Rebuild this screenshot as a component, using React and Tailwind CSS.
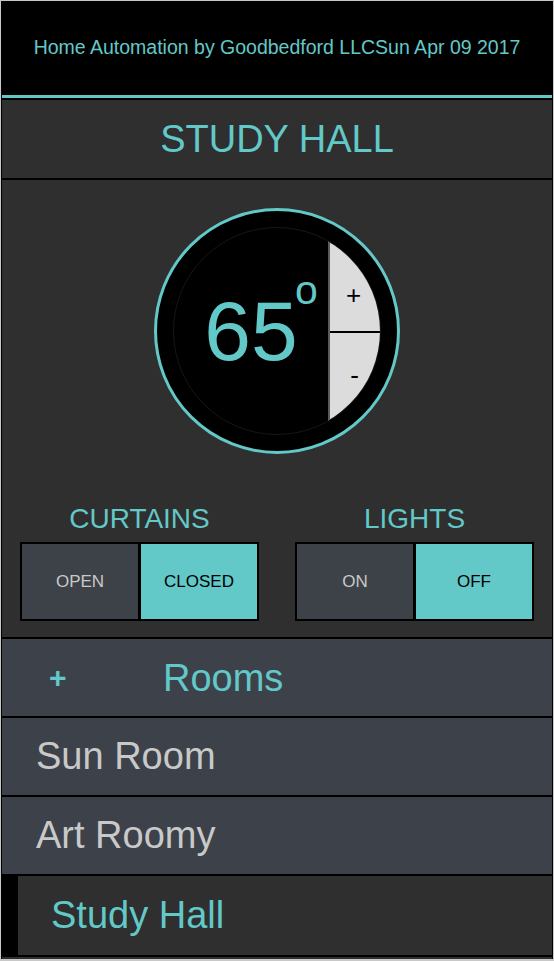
import React from "react";

const rooms = [
  { name: "Sun Room", active: false },
  { name: "Art Roomy", active: false },
  { name: "Study Hall", active: true },
];

const Toggle = ({ label, left, right, active }) => (
  <div className="flex flex-1 flex-col items-center">
    <div className="text-[28px] leading-none text-[#63c8c8]">{label}</div>
    <div className="mt-[9px] flex">
      {[left, right].map((opt) => (
        <div
          key={opt}
          className={`flex h-[79px] w-[120px] items-center justify-center border-2 border-black text-[17px] ${
            opt === active ? "bg-[#63c8c8] text-black" : "bg-[#3d4148] text-[#c9c9c9]"
          } ${opt === right ? "-ml-[1px]" : ""}`}
        >
          {opt}
        </div>
      ))}
    </div>
  </div>
);

export default function App() {
  return (
    <div
      className="h-[961px] w-[554px] bg-[#c8c8c8] px-[1px] pt-[1px]"
      style={{ fontFamily: '"Liberation Sans", Arial, sans-serif' }}
    >
      <div className="flex h-[958px] flex-col overflow-hidden border-x border-black bg-[#2f2f2f]">
        {/* header */}
        <div className="flex h-[94px] items-center justify-center bg-black text-[19.5px] text-[#63c8c8]">
          Home Automation by Goodbedford LLCSun Apr 09 2017
        </div>
        <div className="h-[3px] bg-[#63c8c8]" />
        <div className="flex h-[82px] items-center justify-center border-y-2 border-black text-[38px] text-[#63c8c8]">
          STUDY HALL
        </div>

        {/* thermostat + toggles */}
        <div className="flex h-[459px] flex-col items-center border-b-2 border-black pt-[28px]">
          <div className="flex h-[246px] w-[246px] items-center justify-center rounded-full border-[3px] border-[#63c8c8] bg-black">
            <div className="flex h-[208px] w-[208px] overflow-hidden rounded-full border border-[#161616]">
              <div className="flex flex-1 items-center justify-center">
                <span className="relative text-[84px] leading-none text-[#63c8c8]">
                  65
                  <span className="absolute -right-[20px] -top-[19px] text-[41px] leading-none">o</span>
                </span>
              </div>
              <div className="flex w-[52px] flex-col border-l-2 border-[#5a5a5a] bg-[#dcdcdc] text-black">
                <div className="flex h-[103px] shrink-0 items-end justify-center pb-[23px] pr-[3px] text-[26px] leading-none">+</div>
                <div className="h-[2px] shrink-0 bg-black" />
                <div className="flex flex-1 items-start justify-center pt-[29px] pr-[1px] text-[26px] leading-none">-</div>
              </div>
            </div>
          </div>

          <div className="mt-[51px] flex w-full">
            <Toggle label="CURTAINS" left="OPEN" right="CLOSED" active="CLOSED" />
            <Toggle label="LIGHTS" left="ON" right="OFF" active="OFF" />
          </div>
        </div>

        {/* rooms list */}
        <div className="flex h-[79px] items-center border-b-2 border-black bg-[#3d424a] text-[#63c8c8]">
          <span className="ml-[47px] w-[114px] text-[30px] font-bold leading-none">+</span>
          <span className="text-[38px] leading-none">Rooms</span>
        </div>
        {rooms.map((room) =>
          room.active ? (
            <div key={room.name} className="flex h-[81px] border-b-2 border-black">
              <div className="w-[16px] bg-black" />
              <div className="flex flex-1 items-center bg-[#2f2f2f] pl-[33px] text-[38px] text-[#63c8c8]">
                {room.name}
              </div>
            </div>
          ) : (
            <div
              key={room.name}
              className="flex h-[79px] items-center border-b-2 border-black bg-[#3d424a] pl-[34px] text-[38px] text-[#c9c9c9]"
            >
              {room.name}
            </div>
          )
        )}
      </div>
    </div>
  );
}
